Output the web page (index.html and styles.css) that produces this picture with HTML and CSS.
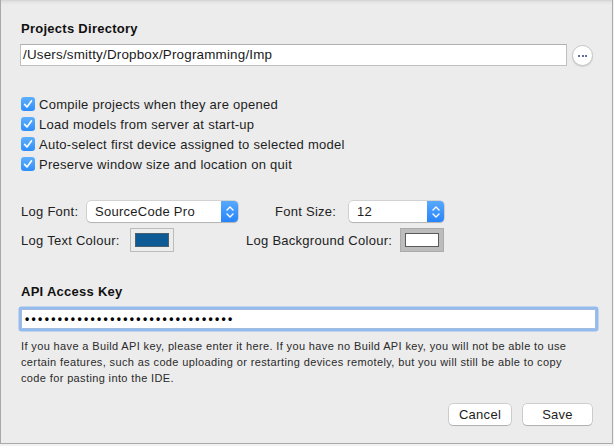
FILE: index.html
```html
<!DOCTYPE html>
<html>
<head>
<meta charset="utf-8">
<link rel="stylesheet" href="styles.css">
</head>
<body>
<div class="window">
  <div class="title">Projects Directory</div>
  <div class="dir-row">
    <div class="field dir-field">/Users/smitty/Dropbox/Programming/Imp</div>
    <div class="more-btn"><span class="dot"></span><span class="dot"></span><span class="dot"></span></div>
  </div>

  <div class="checks">
    <div class="check-row"><span class="cb"><svg viewBox="0 0 14 14" width="14" height="14"><path d="M3.6 7.4 L6 9.9 L10.4 3.9" fill="none" stroke="#fff" stroke-width="1.7" stroke-linecap="round" stroke-linejoin="round"/></svg></span><span>Compile projects when they are opened</span></div>
    <div class="check-row"><span class="cb"><svg viewBox="0 0 14 14" width="14" height="14"><path d="M3.6 7.4 L6 9.9 L10.4 3.9" fill="none" stroke="#fff" stroke-width="1.7" stroke-linecap="round" stroke-linejoin="round"/></svg></span><span>Load models from server at start-up</span></div>
    <div class="check-row"><span class="cb"><svg viewBox="0 0 14 14" width="14" height="14"><path d="M3.6 7.4 L6 9.9 L10.4 3.9" fill="none" stroke="#fff" stroke-width="1.7" stroke-linecap="round" stroke-linejoin="round"/></svg></span><span>Auto-select first device assigned to selected model</span></div>
    <div class="check-row"><span class="cb"><svg viewBox="0 0 14 14" width="14" height="14"><path d="M3.6 7.4 L6 9.9 L10.4 3.9" fill="none" stroke="#fff" stroke-width="1.7" stroke-linecap="round" stroke-linejoin="round"/></svg></span><span>Preserve window size and location on quit</span></div>
  </div>

  <div class="prefs-grid">
    <div class="pref font-pref">
      <span class="lbl">Log Font:</span>
      <div class="popup popup-font"><span class="popup-text">SourceCode Pro</span><span class="stepper"><svg viewBox="0 0 16 20" width="16" height="20"><path d="M5 8 L8 5 L11 8 M5 12 L8 15 L11 12" fill="none" stroke="#fff" stroke-width="1.4" stroke-linecap="round" stroke-linejoin="round"/></svg></span></div>
    </div>
    <div class="pref size-pref">
      <span class="lbl">Font Size:</span>
      <div class="popup popup-size"><span class="popup-text">12</span><span class="stepper"><svg viewBox="0 0 16 20" width="16" height="20"><path d="M5 8 L8 5 L11 8 M5 12 L8 15 L11 12" fill="none" stroke="#fff" stroke-width="1.4" stroke-linecap="round" stroke-linejoin="round"/></svg></span></div>
    </div>
    <div class="pref text-colour">
      <span class="lbl">Log Text Colour:</span>
      <div class="well"><div class="swatch swatch-blue"></div></div>
    </div>
    <div class="pref bg-colour">
      <span class="lbl">Log Background Colour:</span>
      <div class="well well-active"><div class="swatch swatch-white"></div></div>
    </div>
  </div>

  <div class="title api-title">API Access Key</div>
  <div class="field key-field">••••••••••••••••••••••••••••••••</div>
  <p class="help">If you have a Build API key, please enter it here. If you have no Build API key, you will not be able to use certain features, such as code uploading or restarting devices remotely, but you will still be able to copy code for pasting into the IDE.</p>

  <div class="buttons">
    <div class="btn btn-cancel">Cancel</div>
    <div class="btn btn-save">Save</div>
  </div>
</div>
</body>
</html>
```

FILE: styles.css
```css
html, body {
  margin: 0;
  padding: 0;
  background: #f2f2f2;
}

.window {
  box-sizing: border-box;
  width: 613px;
  height: 444px;
  background: linear-gradient(#d2d2d2 0px, #e4e4e4 2px, #ececec 5px, #ececec 100%);
  border-left: 1px solid #a9a9a9;
  border-right: 1px solid #a9a9a9;
  border-bottom: 1px solid #a9a9a9;
  padding: 20px 0 0 20px;
  font-family: "Liberation Sans", Arial, sans-serif;
  font-size: 13px;
  letter-spacing: 0.27px;
  color: #222;
  display: flex;
  flex-direction: column;
}

.title {
  font-weight: bold;
  font-size: 13px;
  line-height: 16px;
  height: 16px;
  color: #111;
  margin-top: 1px;
}

.dir-row {
  margin-top: 7px;
  display: flex;
  align-items: center;
  gap: 5px;
}

.field {
  box-sizing: border-box;
  background: #fff;
  border: 1px solid #c0c0c0;
  border-top-color: #b0b0b0;
  line-height: 20px;
  padding-left: 2px;
}

.dir-field {
  margin-left: -1px;
  width: 547px;
  height: 22px;
  font-size: 13.4px;
  letter-spacing: 0.2px;
  color: #1a1a1a;
}

.more-btn {
  box-sizing: border-box;
  width: 21px;
  height: 21px;
  border-radius: 50%;
  background: #fff;
  border: 1px solid #c6c6c6;
  box-shadow: 0 1px 1px rgba(0,0,0,0.12);
  display: flex;
  justify-content: center;
  align-items: center;
  gap: 1.5px;
  padding-top: 1px;
}

.dot {
  width: 2px;
  height: 2px;
  border-radius: 50%;
  background: #2b3f7a;
}

.checks {
  margin-top: 28px;
  display: flex;
  flex-direction: column;
}

.check-row {
  height: 20px;
  display: flex;
  align-items: center;
  gap: 4px;
  color: #1d1d1d;
}

.cb {
  width: 14px;
  height: 14px;
  border-radius: 3px;
  background: linear-gradient(#5fb0fc, #2e8dfb);
  display: flex;
}

.prefs-grid {
  margin-top: 27px;
  display: grid;
  grid-template-columns: 225px 230px;
  grid-template-rows: 21px 24px;
  row-gap: 6px;
}

.pref {
  display: flex;
  align-items: center;
}

.lbl {
  color: #222;
}

.font-pref .lbl { width: 66px; }
.size-pref { padding-left: 29px; }
.size-pref .lbl { width: 74px; }
.text-colour .lbl { width: 109px; }
.bg-colour .lbl { width: 154px; }

.popup {
  box-sizing: border-box;
  height: 21px;
  border-radius: 4px;
  background: #fff;
  box-shadow: 0 0 0 0.5px rgba(0,0,0,0.22), 0 1px 1px rgba(0,0,0,0.15);
  display: flex;
  align-items: center;
  overflow: hidden;
}

.popup-font { width: 151px; }
.popup-size { width: 95px; }

.popup-text {
  flex: 1;
  padding-left: 8px;
  color: #1d1d1d;
}

.stepper {
  width: 17px;
  height: 21px;
  background: linear-gradient(#58a9fc, #2784fa);
  display: flex;
  align-items: center;
  justify-content: center;
}

.well {
  box-sizing: border-box;
  width: 44px;
  height: 24px;
  border: 1px solid #bcbcbc;
  background: #ececec;
  padding: 4px;
}

.well-active {
  background: #bcbcbc;
  border-color: #ababab;
}

.swatch {
  box-sizing: border-box;
  width: 100%;
  height: 100%;
  border: 1px solid #555;
}

.swatch-blue { background: #0d5a95; border-color: #4a5e70; }
.swatch-white { background: #fff; border-color: #5a5a5a; }

.api-title {
  margin-top: 32px;
}

.key-field {
  margin-top: 9px;
  margin-left: 0px;
  width: 575px;
  height: 20px;
  line-height: 18px;
  border: 1px solid #a3bde0;
  box-shadow: 0 0 0 2.5px #93bbee;
  border-radius: 1px;
  font-size: 12px;
  font-weight: bold;
  letter-spacing: 2.35px;
  color: #000;
  padding-left: 3px;
}

.help {
  margin: 9px 0 0 0;
  width: 560px;
  font-size: 11px;
  letter-spacing: 0.37px;
  line-height: 16px;
  color: #2a2a2a;
}

.buttons {
  margin-top: 18px;
  display: flex;
  justify-content: flex-end;
  gap: 12px;
  padding-right: 20px;
}

.btn {
  box-sizing: border-box;
  height: 21px;
  border-radius: 4px;
  background: #fff;
  box-shadow: 0 0 0 0.5px rgba(0,0,0,0.25), 0 1px 1px rgba(0,0,0,0.15);
  text-align: center;
  line-height: 21px;
  color: #1d1d1d;
}

.btn-cancel { width: 62px; }
.btn-save { width: 69px; }
```
